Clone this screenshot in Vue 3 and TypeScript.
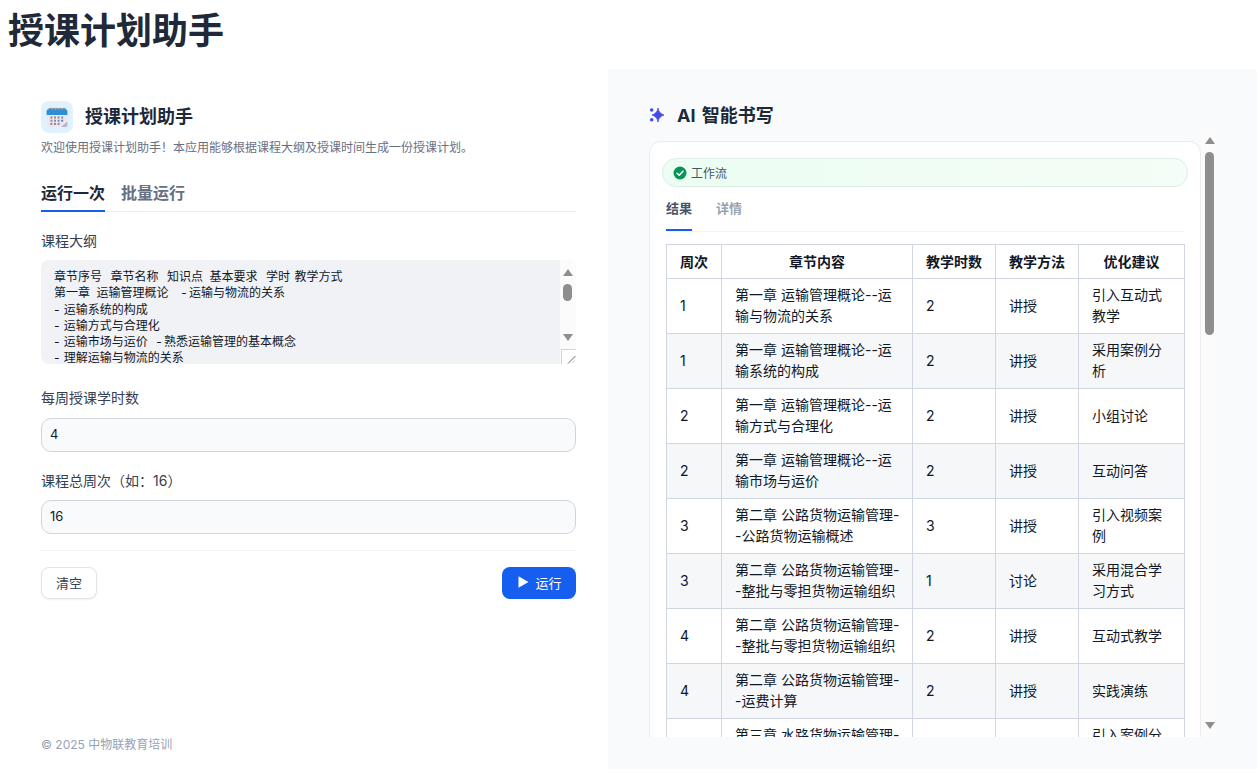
<script setup lang="ts">
interface Row { week: string; chapter: string; hours: string; method: string; tip: string }
const rows: Row[] = [
  { week: '1', chapter: '第一章 运输管理概论--运输与物流的关系', hours: '2', method: '讲授', tip: '引入互动式教学' },
  { week: '1', chapter: '第一章 运输管理概论--运输系统的构成', hours: '2', method: '讲授', tip: '采用案例分析' },
  { week: '2', chapter: '第一章 运输管理概论--运输方式与合理化', hours: '2', method: '讲授', tip: '小组讨论' },
  { week: '2', chapter: '第一章 运输管理概论--运输市场与运价', hours: '2', method: '讲授', tip: '互动问答' },
  { week: '3', chapter: '第二章 公路货物运输管理--公路货物运输概述', hours: '3', method: '讲授', tip: '引入视频案例' },
  { week: '3', chapter: '第二章 公路货物运输管理--整批与零担货物运输组织', hours: '1', method: '讨论', tip: '采用混合学习方式' },
  { week: '4', chapter: '第二章 公路货物运输管理--整批与零担货物运输组织', hours: '2', method: '讲授', tip: '互动式教学' },
  { week: '4', chapter: '第二章 公路货物运输管理--运费计算', hours: '2', method: '讲授', tip: '实践演练' },
  { week: '5', chapter: '第三章 水路货物运输管理--水路货物运输概述', hours: '2', method: '讲授', tip: '引入案例分析' },
]
const outline = `章节序号  章节名称  知识点\u2009 基本要求  学时 教学方式
第一章 \u2009运输管理概论   -\u2009运输与物流的关系
- 运输系统的构成
- 运输方式与合理化
- 运输市场与运价  -\u2009熟悉运输管理的基本概念
- 理解运输与物流的关系`
</script>

<template>
  <div class="page">
    <h1 class="page-title">授课计划助手</h1>
    <div class="columns">
      <section class="left">
        <div class="app-head">
          <span class="app-icon">
            <svg width="22" height="22" viewBox="0 0 22 22">
              <rect x="0.6" y="3" width="20.8" height="18" rx="2.5" fill="#ece8f1" />
              <path d="M20 21 h-5 l6.4-5.5 v3.5 a2 2 0 0 1-1.4 2z" fill="#b9b3c4" />
              <path d="M0.6 9 V5.5 A2.5 2.5 0 0 1 3.1 3 h15.8 a2.5 2.5 0 0 1 2.5 2.5 V9z" fill="#2d8fd5" />
              <g fill="none" stroke="#8a97ab" stroke-width="1.2">
                <path d="M2.6 4 a1.7 1.7 0 0 1 3.4 0 M6 4 a1.7 1.7 0 0 1 3.4 0 M9.4 4 a1.7 1.7 0 0 1 3.4 0 M12.8 4 a1.7 1.7 0 0 1 3.4 0 M16.2 4 a1.7 1.7 0 0 1 3.4 0" />
              </g>
              <g fill="#8d8799">
                <rect x="4.4" y="10.5" width="2" height="2" /><rect x="8" y="10.5" width="2" height="2" /><rect x="11.6" y="10.5" width="2" height="2" /><rect x="15.2" y="10.5" width="2" height="2" />
                <rect x="4.4" y="13.7" width="2" height="2" /><rect x="8" y="13.7" width="2" height="2" /><rect x="11.6" y="13.7" width="2" height="2" />
                <rect x="4.4" y="16.9" width="2" height="2" /><rect x="8" y="16.9" width="2" height="2" /><rect x="11.6" y="16.9" width="2" height="2" />
              </g>
              <rect x="15.2" y="13.7" width="2" height="2" fill="#2d8fd5" />
            </svg>
          </span>
          <h2 class="app-name">授课计划助手</h2>
        </div>
        <p class="app-desc">欢迎使用授课计划助手！本应用能够根据课程大纲及授课时间生成一份授课计划。</p>

        <div class="tabs">
          <span class="tab active">运行一次</span>
          <span class="tab">批量运行</span>
        </div>

        <label class="label first">课程大纲</label>
        <div class="area-wrap">
          <textarea class="area" :value="outline" readonly></textarea>
          <div class="area-bar" aria-hidden="true">
            <span class="arrow up"></span>
            <span class="area-thumb"></span>
            <span class="arrow down"></span>
            <span class="resizer">
              <svg width="10" height="10" viewBox="0 0 10 10"><path d="M2 9.5 L9.5 2 M6 9.5 L9.5 6" stroke="#666" stroke-width="1" fill="none" /></svg>
            </span>
          </div>
        </div>

        <label class="label second">每周授课学时数</label>
        <input class="input" value="4" readonly />
        <label class="label third">课程总周次（如：16）</label>
        <input class="input last" value="16" readonly />

        <div class="actions">
          <button class="btn clear" type="button">清空</button>
          <button class="btn run" type="button">
            <svg width="12" height="12" viewBox="0 0 12 12"><path d="M1.5 0.3 L11.5 6 L1.5 11.7z" fill="#fff" /></svg>
            运行
          </button>
        </div>

        <footer class="copyright">© 2025 中物联教育培训</footer>
      </section>

      <section class="right">
        <div class="ai-head">
          <svg width="18" height="18" viewBox="0 0 18 18">
            <path d="M9 2 C9.7 5.6 11 7.4 15 9 C11 10.6 9.7 12.4 9 16 C8.3 12.4 7 10.6 3 9 C7 7.4 8.3 5.6 9 2z" fill="#444ce7" stroke="#444ce7" stroke-width="0.8" stroke-linejoin="round" />
            <circle cx="2.7" cy="4" r="1.8" fill="#444ce7" />
            <circle cx="2.7" cy="13.8" r="1.8" fill="#444ce7" />
          </svg>
          <h2 class="ai-title">AI 智能书写</h2>
        </div>
        <div class="scroller">
          <div class="card">
            <div class="flow">
              <svg width="14" height="14" viewBox="0 0 14 14">
                <circle cx="7" cy="7" r="6.5" fill="#079455" />
                <path d="M4 7.2 L6.2 9.3 L10 5.2" fill="none" stroke="#fff" stroke-width="1.5" stroke-linecap="round" stroke-linejoin="round" />
              </svg>
              <span>工作流</span>
            </div>
            <div class="result-tabs">
              <span class="rtab active">结果</span>
              <span class="rtab">详情</span>
            </div>
            <table class="plan">
              <colgroup>
                <col class="c1" /><col class="c2" /><col class="c3" /><col class="c4" /><col class="c5" />
              </colgroup>
              <thead>
                <tr><th>周次</th><th>章节内容</th><th>教学时数</th><th>教学方法</th><th>优化建议</th></tr>
              </thead>
              <tbody>
                <tr v-for="(r, i) in rows" :key="i">
                  <td>{{ r.week }}</td><td class="chapter">{{ r.chapter }}</td><td>{{ r.hours }}</td><td>{{ r.method }}</td><td>{{ r.tip }}</td>
                </tr>
              </tbody>
            </table>
          </div>
          <div class="page-bar" aria-hidden="true">
            <span class="arrow up"></span>
            <span class="page-thumb"></span>
            <span class="arrow down bottom"></span>
          </div>
        </div>
      </section>
    </div>
  </div>
</template>

<style>
html, body { margin: 0; background: #fff; }
</style>

<style scoped>
.page {
  width: 1257px;
  height: 769px;
  display: flex;
  flex-direction: column;
  overflow: hidden;
  font-family: Inter, "Noto Sans CJK SC", sans-serif;
  color: #101828;
}
.page-title {
  margin: 0;
  height: 69px;
  padding: 8px 0 0 8px;
  box-sizing: border-box;
  font-size: 36px;
  line-height: 46px;
  font-weight: 700;
  color: #1f2937;
}
.columns { flex: 1; display: flex; min-height: 0; }
.left {
  width: 608px;
  box-sizing: border-box;
  padding: 32px 32px 0 41px;
  display: flex;
  flex-direction: column;
  background: #fff;
}
.app-head { display: flex; align-items: center; gap: 12px; }
.app-icon {
  width: 32px; height: 32px; border-radius: 8px; background: #e0f2fe;
  display: flex; align-items: center; justify-content: center;
}
.app-name { margin: 0; font-size: 18px; line-height: 24px; font-weight: 600; color: #1d2939; }
.app-desc { margin: 6px 0 0; font-size: 12px; line-height: 18px; color: #676f83; }
.tabs { margin-top: 24px; display: flex; gap: 16px; border-bottom: 1px solid #eaecf0; }
.tab { font-size: 16px; line-height: 24px; font-weight: 600; color: #676f83; padding-bottom: 5px; margin-bottom: -1px; border-bottom: 2px solid transparent; }
.tab.active { color: #1d2939; border-bottom-color: #155eef; }
.label { display: block; font-size: 14px; line-height: 20px; color: #354052; }
.label.first { margin-top: 19px; }
.label.second { margin-top: 24px; }
.label.third { margin-top: 19px; }
.area-wrap { position: relative; margin-top: 9px; height: 104px; border-radius: 8px; overflow: hidden; }
.area {
  display: block; width: 100%; height: 104px; box-sizing: border-box; border: 0; outline: 0; resize: none;
  overflow: hidden; margin: 0; padding: 9px 30px 0 13px; background: #f0f2f6; color: #101828;
  font-family: inherit; font-size: 12px; line-height: 16.25px; word-spacing: 0.9px;
}
.area-bar { position: absolute; top: 0; right: 0; width: 16px; height: 104px; background: #fbfbfb; }
.arrow { position: absolute; left: 3px; width: 0; height: 0; border-left: 5px solid transparent; border-right: 5px solid transparent; }
.arrow.up { top: 9px; border-bottom: 7px solid #8e8e8e; }
.arrow.down { top: 74px; border-top: 7px solid #8e8e8e; }
.area-thumb { position: absolute; top: 24px; left: 3px; width: 9px; height: 17px; border-radius: 5px; background: #8e8e8e; }
.resizer { position: absolute; right: 0; bottom: 0; width: 15px; height: 15px; box-sizing: border-box; border: 1px solid #d4d4d4; border-right: 0; border-bottom: 0; background: #fff; display: flex; align-items: flex-end; justify-content: flex-end; }
.input {
  display: block; width: 100%; box-sizing: border-box; height: 34px; margin-top: 10px; padding: 0 8px 2px;
  border: 1px solid #d0d5dd; border-radius: 10px; background: #f9fafb; outline: 0;
  font-family: inherit; font-size: 13px; color: #101828;
}
.input.last { margin-top: 9px; }
.actions { margin-top: 16px; padding-top: 16px; border-top: 1px solid #f2f4f7; display: flex; justify-content: space-between; align-items: center; }
.btn { height: 32px; box-sizing: border-box; border-radius: 8px; font-family: inherit; font-size: 13px; display: inline-flex; align-items: center; justify-content: center; padding: 0 0 2px; }
.clear { width: 56px; background: #fff; color: #354052; border: 1px solid #e0e3e8; box-shadow: 0 1px 2px rgba(16, 24, 40, 0.05); }
.run { width: 74px; background: #155eef; color: #fff; border: 0; gap: 6px; padding-left: 1px; }
.copyright { margin-top: auto; margin-bottom: 15px; font-size: 12px; line-height: 18px; color: #98a2b3; }

.right { flex: 1; min-width: 0; box-sizing: border-box; padding: 32px 40px 32px 41px; background: #f9fafb; display: flex; flex-direction: column; }
.ai-head { height: 28px; display: flex; align-items: center; gap: 10px; }
.ai-title { margin: 2px 0 0; font-size: 18px; line-height: 28px; font-weight: 700; color: #1d2939; word-spacing: 2px; }
.scroller { position: relative; flex: 1; min-height: 0; overflow: hidden; padding-top: 12px; padding-right: 16px; }
.card { background: #fff; border: 1px solid #eaecf0; border-radius: 12px; padding: 16px 12px 0; box-sizing: border-box; }
.flow {
  height: 29px; box-sizing: border-box; display: flex; align-items: center; gap: 4px; padding-left: 10px;
  border: 1px solid #dcefe5; border-radius: 14px; background: linear-gradient(90deg, #ecfdf3, #f4fdf7);
  font-size: 12px; color: #475467;
}
.result-tabs { margin: 8px 4px 0; height: 36px; display: flex; gap: 24px; border-bottom: 1px solid #f2f4f7; }
.rtab { font-size: 13px; line-height: 26px; font-weight: 600; color: #98a2b3; height: 34px; border-bottom: 2px solid transparent; }
.rtab.active { color: #475467; border-bottom-color: #155eef; }
.plan { margin: 12px 0 0 4px; width: 518px; table-layout: fixed; border-collapse: collapse; font-size: 14px; line-height: 21px; color: #101828; }
.c1 { width: 55px; } .c2 { width: 191px; } .c3 { width: 83px; } .c4 { width: 83px; } .c5 { width: 106px; }
.plan th, .plan td { border: 1px solid #d0d7e3; }
.plan th { text-align: center; font-weight: 600; height: 21px; padding: 6px 8px; }
.plan td { height: 42px; padding: 5px 13px 7px; text-align: left; }
.plan td.chapter { padding-right: 9px; word-break: break-all; }
.plan tbody tr:nth-child(even) td { background: #f5f7f9; }
.page-bar { position: absolute; top: 0; right: 0; bottom: 0; width: 16px; background: #fbfbfb; }
.page-thumb { position: absolute; top: 23px; left: 4px; width: 9px; height: 183px; border-radius: 5px; background: #8e8e8e; }
.page-bar .arrow { left: 4px; }
.page-bar .arrow.up { top: 8px; }
.page-bar .arrow.bottom { top: auto; bottom: 8px; }
</style>
